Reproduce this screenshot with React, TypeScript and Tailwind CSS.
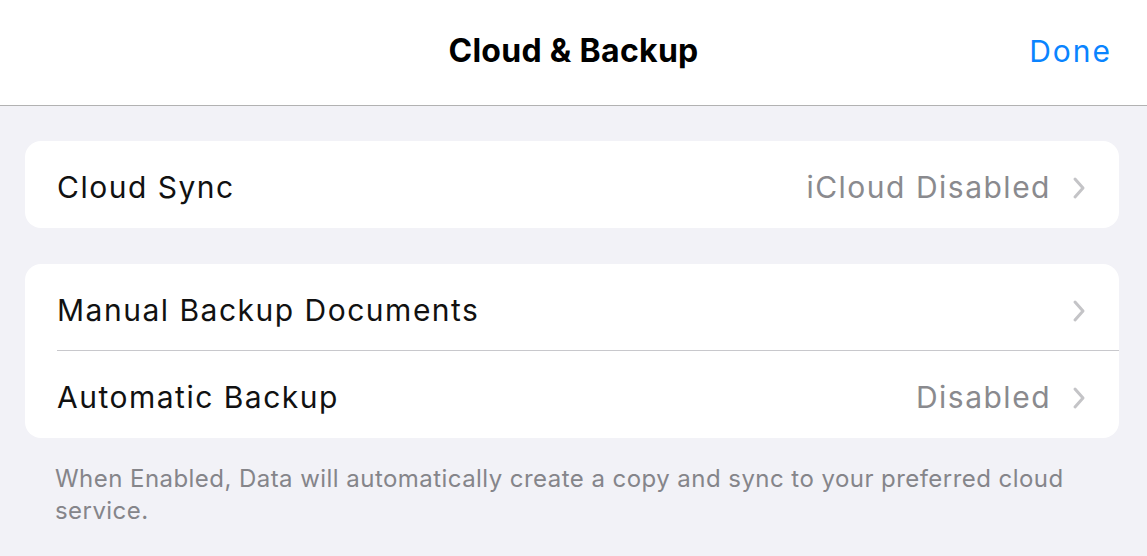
function Chevron() {
  return (
    <svg width="14" height="24" viewBox="0 0 14 24" className="shrink-0" fill="none">
      <path d="M3 3 L11 12 L3 21" stroke="#c4c4c7" strokeWidth="3" strokeLinecap="round" strokeLinejoin="round" />
    </svg>
  )
}

function Row({ label, value, divider }: { label: string; value?: string; divider?: boolean }) {
  return (
    <div className="relative flex h-[87px] items-center pl-8 pr-[33px] pt-[6px]">
      <span className="flex-1 text-[30px] tracking-[1.5px] text-[#111]">{label}</span>
      {value && <span className="mr-[21px] text-[30px] tracking-[1.5px] text-[#8a8a8e]">{value}</span>}
      <Chevron />
      {divider && <div className="absolute bottom-0 left-8 right-0 h-px bg-[#c8c8cc]" />}
    </div>
  )
}

export default function App() {
  return (
    <div className="h-[556px] w-[1147px] overflow-hidden bg-[#f2f2f7]" style={{ fontFamily: "Inter, 'Noto Sans', sans-serif" }}>
      <header className="relative flex h-[106px] items-center justify-center border-b border-[#b2b2b2] bg-white pb-1">
        <h1 className="text-[32px] font-bold tracking-[0.3px] text-black">Cloud &amp; Backup</h1>
        <button className="absolute right-[35px] top-[29px] text-[30px] tracking-[2px] text-[#0a84ff]">Done</button>
      </header>
      <main className="flex flex-col pl-[25px] pr-[28px] pt-[35px]">
        <section className="overflow-hidden rounded-2xl bg-white">
          <Row label="Cloud Sync" value="iCloud Disabled" />
        </section>
        <section className="mt-9 overflow-hidden rounded-2xl bg-white">
          <Row label="Manual Backup Documents" divider />
          <Row label="Automatic Backup" value="Disabled" />
        </section>
        <p className="mt-[25px] px-[30px] text-[24px] leading-[32px] tracking-[0.45px] text-[#85858a]">
          When Enabled, Data will automatically create a copy and sync to your preferred cloud service.
        </p>
      </main>
    </div>
  )
}
